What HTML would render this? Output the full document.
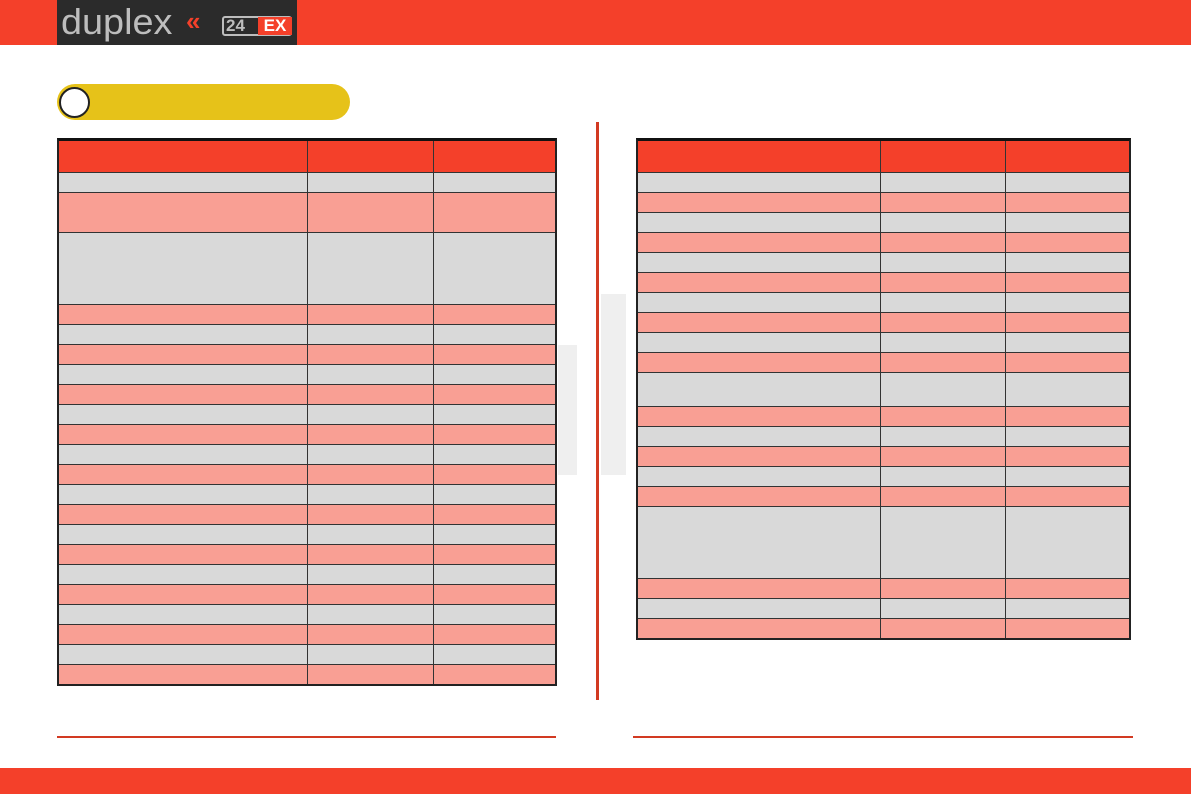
<!DOCTYPE html><html><head><meta charset="utf-8"><style>
*{margin:0;padding:0;box-sizing:border-box}
body{width:1191px;height:794px;position:relative;background:#fff;font-family:"Liberation Sans",sans-serif;overflow:hidden}
.a{position:absolute}
.t{position:absolute;border:2px solid #222;border-top:3px solid #111}
.r{display:flex;border-bottom:1px solid #333}
.r:last-child{border-bottom:none}
.r div{border-right:1px solid #333}
.r div:last-child{border-right:none;flex:1}
.h{background:#f4402a}.g{background:#d9d9d9}.p{background:#f99f94}
</style></head><body>
<div class="a" style="left:0;top:0;width:1191px;height:45px;background:#f4402a"></div>
<div class="a" style="left:57px;top:0;width:240px;height:45px;background:#2b2b2b"></div>
<div class="a" style="left:61px;top:2px;font-size:36px;color:#bdbdbd;line-height:40px;transform:scaleX(1.05);transform-origin:left">duplex</div>
<div class="a" style="left:186px;top:6px;font-size:26px;color:#f4402a;font-weight:bold;letter-spacing:-6px">«</div>
<div class="a" style="left:222px;top:16px;width:70px;height:20px;border:2px solid #bdbdbd;border-radius:3px"></div>
<div class="a" style="left:226px;top:16px;font-size:17px;color:#bdbdbd;font-weight:bold;line-height:20px">24</div>
<div class="a" style="left:258px;top:17px;width:34px;height:18px;background:#f4402a;color:#fff;font-weight:bold;font-size:17px;line-height:18px;text-align:center">EX</div>
<div class="a" style="left:57px;top:84px;width:293px;height:36px;background:#e6c219;border-radius:18px"></div>
<div class="a" style="left:59px;top:87px;width:31px;height:31px;background:#fff;border:2px solid #222;border-radius:50%"></div>
<div class="a" style="left:558px;top:345px;width:19px;height:130px;background:#efefef"></div>
<div class="a" style="left:601px;top:294px;width:25px;height:181px;background:#efefef"></div>
<div class="a" style="left:596px;top:122px;width:3px;height:578px;background:#d23a22"></div>
<div class="a" style="left:57px;top:736px;width:499px;height:2px;background:#d23a22"></div>
<div class="a" style="left:633px;top:736px;width:500px;height:2px;background:#d23a22"></div>
<div class="a" style="left:0;top:768px;width:1191px;height:26px;background:#f4402a"></div>

<div class="t" style="left:57px;top:138px;width:500px">
<div class="r h" style="height:32px"><div style="width:249px"></div><div style="width:126px"></div><div></div></div>
<div class="r g" style="height:20px"><div style="width:249px"></div><div style="width:126px"></div><div></div></div>
<div class="r p" style="height:40px"><div style="width:249px"></div><div style="width:126px"></div><div></div></div>
<div class="r g" style="height:72px"><div style="width:249px"></div><div style="width:126px"></div><div></div></div>
<div class="r p" style="height:20px"><div style="width:249px"></div><div style="width:126px"></div><div></div></div>
<div class="r g" style="height:20px"><div style="width:249px"></div><div style="width:126px"></div><div></div></div>
<div class="r p" style="height:20px"><div style="width:249px"></div><div style="width:126px"></div><div></div></div>
<div class="r g" style="height:20px"><div style="width:249px"></div><div style="width:126px"></div><div></div></div>
<div class="r p" style="height:20px"><div style="width:249px"></div><div style="width:126px"></div><div></div></div>
<div class="r g" style="height:20px"><div style="width:249px"></div><div style="width:126px"></div><div></div></div>
<div class="r p" style="height:20px"><div style="width:249px"></div><div style="width:126px"></div><div></div></div>
<div class="r g" style="height:20px"><div style="width:249px"></div><div style="width:126px"></div><div></div></div>
<div class="r p" style="height:20px"><div style="width:249px"></div><div style="width:126px"></div><div></div></div>
<div class="r g" style="height:20px"><div style="width:249px"></div><div style="width:126px"></div><div></div></div>
<div class="r p" style="height:20px"><div style="width:249px"></div><div style="width:126px"></div><div></div></div>
<div class="r g" style="height:20px"><div style="width:249px"></div><div style="width:126px"></div><div></div></div>
<div class="r p" style="height:20px"><div style="width:249px"></div><div style="width:126px"></div><div></div></div>
<div class="r g" style="height:20px"><div style="width:249px"></div><div style="width:126px"></div><div></div></div>
<div class="r p" style="height:20px"><div style="width:249px"></div><div style="width:126px"></div><div></div></div>
<div class="r g" style="height:20px"><div style="width:249px"></div><div style="width:126px"></div><div></div></div>
<div class="r p" style="height:20px"><div style="width:249px"></div><div style="width:126px"></div><div></div></div>
<div class="r g" style="height:20px"><div style="width:249px"></div><div style="width:126px"></div><div></div></div>
<div class="r p" style="height:19px"><div style="width:249px"></div><div style="width:126px"></div><div></div></div>
</div>

<div class="t" style="left:636px;top:138px;width:495px">
<div class="r h" style="height:32px"><div style="width:243px"></div><div style="width:125px"></div><div></div></div>
<div class="r g" style="height:20px"><div style="width:243px"></div><div style="width:125px"></div><div></div></div>
<div class="r p" style="height:20px"><div style="width:243px"></div><div style="width:125px"></div><div></div></div>
<div class="r g" style="height:20px"><div style="width:243px"></div><div style="width:125px"></div><div></div></div>
<div class="r p" style="height:20px"><div style="width:243px"></div><div style="width:125px"></div><div></div></div>
<div class="r g" style="height:20px"><div style="width:243px"></div><div style="width:125px"></div><div></div></div>
<div class="r p" style="height:20px"><div style="width:243px"></div><div style="width:125px"></div><div></div></div>
<div class="r g" style="height:20px"><div style="width:243px"></div><div style="width:125px"></div><div></div></div>
<div class="r p" style="height:20px"><div style="width:243px"></div><div style="width:125px"></div><div></div></div>
<div class="r g" style="height:20px"><div style="width:243px"></div><div style="width:125px"></div><div></div></div>
<div class="r p" style="height:20px"><div style="width:243px"></div><div style="width:125px"></div><div></div></div>
<div class="r g" style="height:34px"><div style="width:243px"></div><div style="width:125px"></div><div></div></div>
<div class="r p" style="height:20px"><div style="width:243px"></div><div style="width:125px"></div><div></div></div>
<div class="r g" style="height:20px"><div style="width:243px"></div><div style="width:125px"></div><div></div></div>
<div class="r p" style="height:20px"><div style="width:243px"></div><div style="width:125px"></div><div></div></div>
<div class="r g" style="height:20px"><div style="width:243px"></div><div style="width:125px"></div><div></div></div>
<div class="r p" style="height:20px"><div style="width:243px"></div><div style="width:125px"></div><div></div></div>
<div class="r g" style="height:72px"><div style="width:243px"></div><div style="width:125px"></div><div></div></div>
<div class="r p" style="height:20px"><div style="width:243px"></div><div style="width:125px"></div><div></div></div>
<div class="r g" style="height:20px"><div style="width:243px"></div><div style="width:125px"></div><div></div></div>
<div class="r p" style="height:19px"><div style="width:243px"></div><div style="width:125px"></div><div></div></div>
</div>
</body></html>
